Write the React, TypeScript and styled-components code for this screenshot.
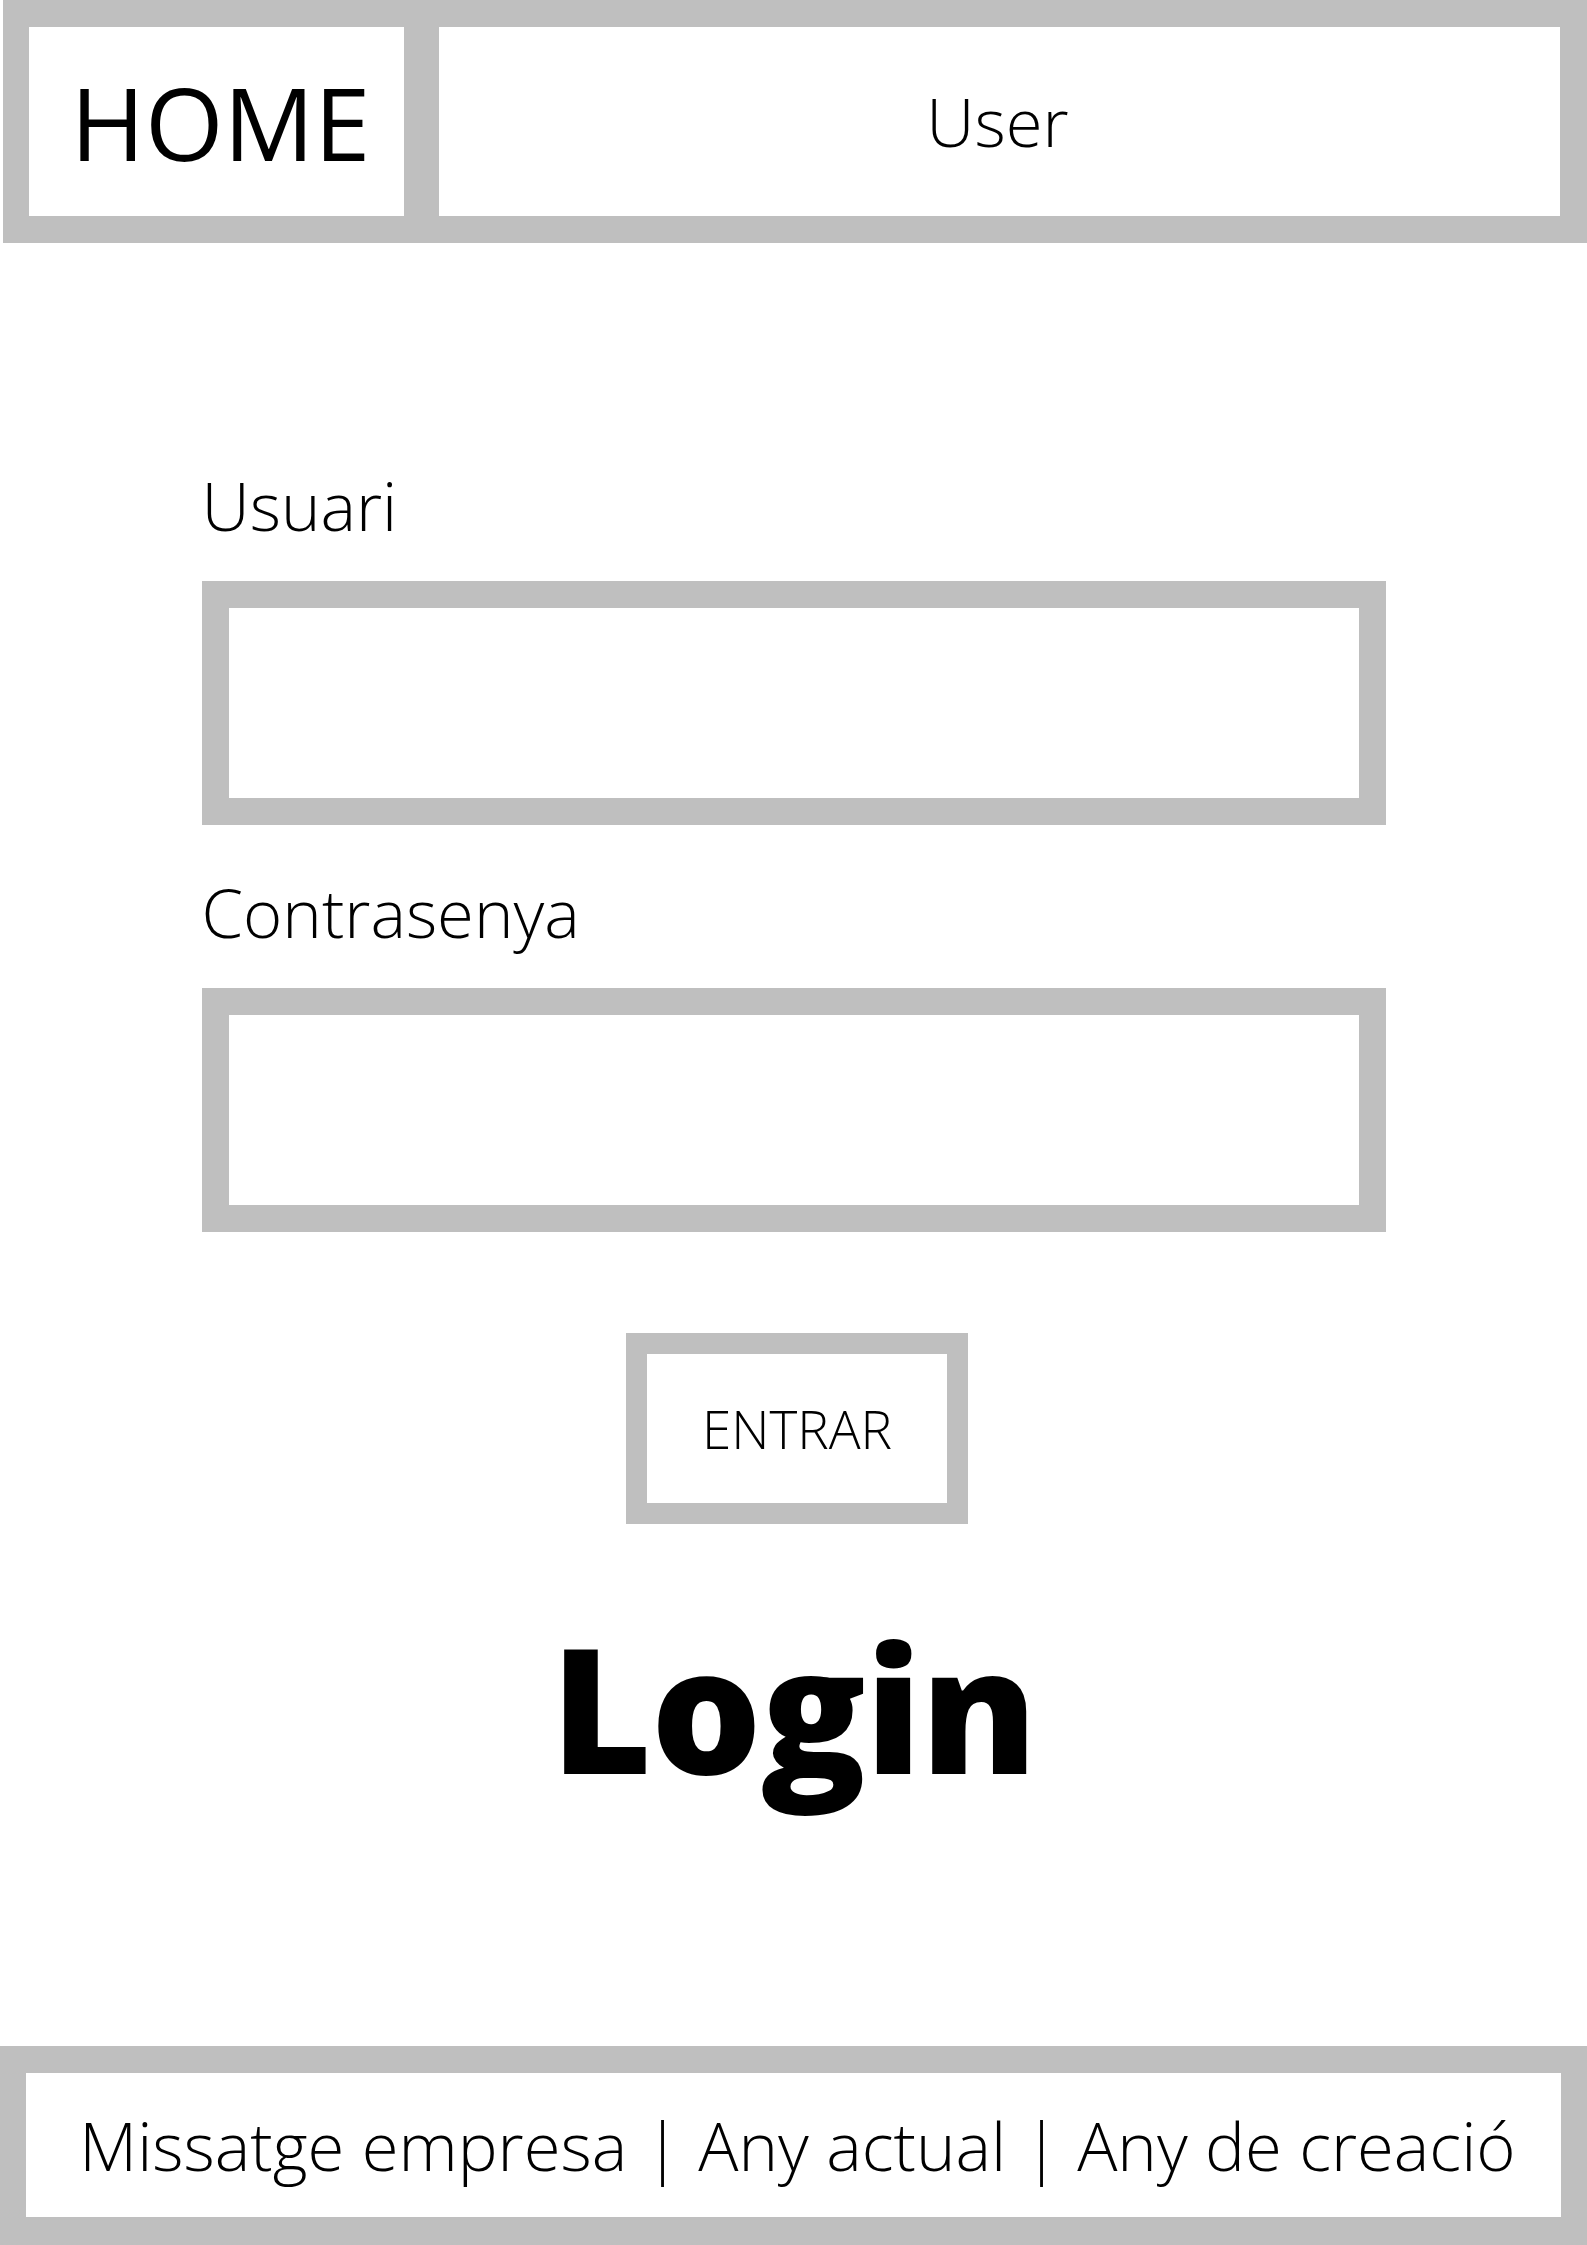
import styled, { createGlobalStyle } from "styled-components";

const GlobalStyle = createGlobalStyle`
  html, body {
    margin: 0;
    padding: 0;
    background: #ffffff;
  }
  body {
    font-family: "Open Sans", "Liberation Sans", sans-serif;
    color: #000000;
  }
`;

const App = () => {
  return (
    <Page>
      <GlobalStyle />
      <Header>
        <HomeCell>HOME</HomeCell>
        <UserCell>User</UserCell>
      </Header>

      <Main>
        <Form>
          <Label>Usuari</Label>
          <Field type="text" />
          <Label $spaced>Contrasenya</Label>
          <Field type="password" />
          <Button type="button">ENTRAR</Button>
        </Form>
        <Title>Login</Title>
      </Main>

      <Footer>
        <FooterInner>Missatge empresa | Any actual | Any de creació</FooterInner>
      </Footer>
    </Page>
  );
};

const Page = styled.div`
  display: flex;
  flex-direction: column;
  min-height: 2245px;
`;

const Header = styled.header`
  display: grid;
  grid-template-columns: 375px 1fr;
  column-gap: 35px;
  margin-left: 3px;
  padding: 27px 27px 27px 26px;
  height: 243px;
  box-sizing: border-box;
  background: #bfbfbf;
`;

const Cell = styled.div`
  display: flex;
  align-items: center;
  justify-content: center;
  background: #ffffff;
  line-height: 1;
`;

const HomeCell = styled(Cell)`
  font-size: 101px;
  font-weight: 400;
  padding: 2px 0 0 8px;
`;

const UserCell = styled(Cell)`
  font-size: 67px;
  font-weight: 300;
  padding-right: 4px;
`;

const Main = styled.main`
  flex: 1;
  display: flex;
  flex-direction: column;
  align-items: center;
  padding-top: 217px;
`;

const Form = styled.div`
  width: 1184px;
  display: flex;
  flex-direction: column;
`;

const Label = styled.label<{ $spaced?: boolean }>`
  font-size: 67px;
  font-weight: 300;
  line-height: 91px;
  margin-top: ${(p) => (p.$spaced ? "42px" : "0")};
  margin-bottom: 30px;
`;

const Field = styled.input`
  display: block;
  width: 100%;
  height: 244px;
  box-sizing: border-box;
  border: 27px solid #bfbfbf;
  background: #ffffff;
  outline: none;
  padding: 0 20px;
  font-size: 60px;
  font-family: inherit;
`;

const Button = styled.button`
  align-self: center;
  margin: 101px 0 0 7px;
  width: 342px;
  height: 191px;
  box-sizing: border-box;
  border: 21px solid #bfbfbf;
  background: #ffffff;
  font-family: "Open Sans", "Liberation Sans", sans-serif;
  font-size: 53px;
  font-weight: 300;
  color: #000000;
  padding: 0;
  cursor: pointer;
`;

const Title = styled.h1`
  margin: 64px 0 0;
  font-size: 174px;
  font-weight: 800;
  line-height: 237px;
  letter-spacing: -1px;
`;

const Footer = styled.footer`
  height: 199px;
  box-sizing: border-box;
  padding: 27px 26px 28px 26px;
  background: #bfbfbf;
  display: flex;
`;

const FooterInner = styled.div`
  flex: 1;
  display: flex;
  align-items: center;
  justify-content: center;
  background: #ffffff;
  font-size: 67px;
  font-weight: 300;
  white-space: nowrap;
  padding-left: 8px;
`;

export default App;
